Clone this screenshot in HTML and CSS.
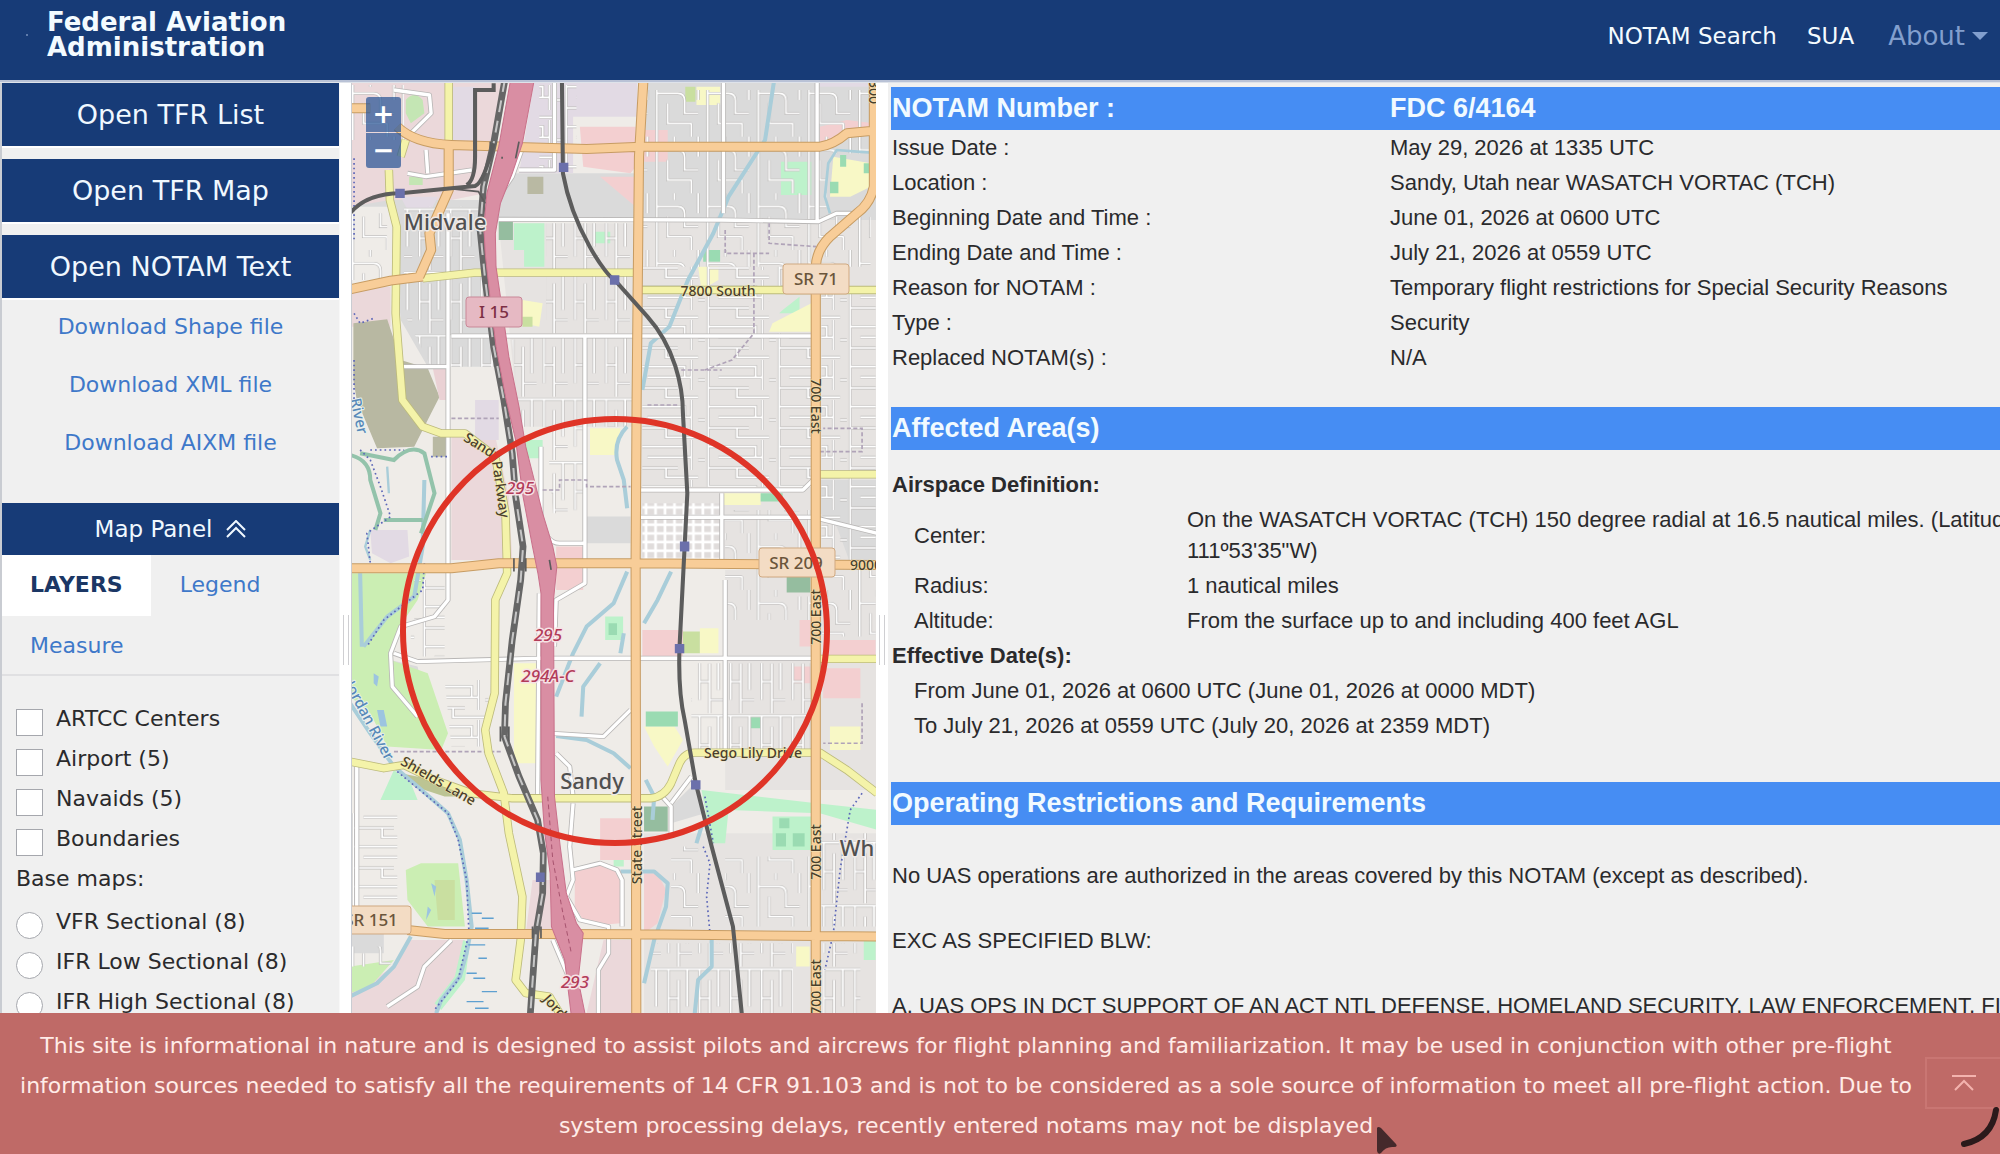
FILE: index.html
```html
<!DOCTYPE html>
<html lang="en">
<head>
<meta charset="utf-8">
<meta name="viewport" content="width=device-width, initial-scale=1">
<title>Federal Aviation Administration - NOTAM FDC 6/4164</title>
<link rel="stylesheet" href="styles.css">
</head>
<body>
<header class="topbar">
  <span class="logo-dot"></span>
  <h1 class="brand">Federal Aviation<br>Administration</h1>
  <nav class="topnav">
    <a href="#search">NOTAM Search</a>
    <a href="#sua">SUA</a>
    <button class="about" type="button">About<span class="caret"></span></button>
  </nav>
</header>

<main class="panes">
  <aside class="sidebar">
    <div class="actions">
      <button class="action" type="button">Open TFR List</button>
      <button class="action" type="button">Open TFR Map</button>
      <button class="action" type="button">Open NOTAM Text</button>
    </div>
    <div class="downloads">
      <a href="#shape">Download Shape file</a>
      <a href="#xml">Download XML file</a>
      <a href="#aixm">Download AIXM file</a>
    </div>
    <button class="panel-toggle" type="button">Map Panel
      <svg width="20" height="18" viewBox="0 0 20 18" fill="none" stroke="currentColor" stroke-width="2"><path d="M1 10 10 1l9 9M1 17l9-9 9 9"/></svg>
    </button>
    <nav class="tabs">
      <a class="tab tab-active" href="#layers">LAYERS</a>
      <a class="tab" href="#legend">Legend</a>
      <a class="tab" href="#measure">Measure</a>
    </nav>
    <form class="layers">
      <label class="option"><input type="checkbox">ARTCC Centers</label>
      <label class="option"><input type="checkbox">Airport (5)</label>
      <label class="option"><input type="checkbox">Navaids (5)</label>
      <label class="option"><input type="checkbox">Boundaries</label>
      <p class="group-title">Base maps:</p>
      <label class="option"><input type="radio" name="base">VFR Sectional (8)</label>
      <label class="option"><input type="radio" name="base">IFR Low Sectional (8)</label>
      <label class="option"><input type="radio" name="base">IFR High Sectional (8)</label>
    </form>
  </aside>

  <div class="splitter"><span class="grip"></span></div>

  <section class="map">
    <svg class="map-canvas" viewBox="0 0 524 930" preserveAspectRatio="xMinYMin slice">
      <defs>
        <pattern id="st-v" width="92" height="190" patternUnits="userSpaceOnUse">
          <path fill="none" stroke="#bbb9b7" stroke-width="9" d="M0 8H92M22 8V150M52 40V190M78 8V120M22 95H52M52 150H92"/>
          <path fill="none" stroke="#fff" stroke-width="5" d="M0 8H92M22 8V150M52 40V190M78 8V120M22 95H52M52 150H92"/>
        </pattern>
        <pattern id="st-h" width="210" height="120" patternUnits="userSpaceOnUse">
          <path fill="none" stroke="#bbb9b7" stroke-width="9" d="M10 0V120M10 20H150V52M40 52H170M10 84H130M95 84V112H190M170 0V90M190 60H210"/>
          <path fill="none" stroke="#fff" stroke-width="5" d="M10 0V120M10 20H150V52M40 52H170M10 84H130M95 84V112H190M170 0V90M190 60H210"/>
        </pattern>
        <pattern id="st-c" width="150" height="170" patternUnits="userSpaceOnUse">
          <path fill="none" stroke="#bbb9b7" stroke-width="9" d="M8 0V170M8 40H70Q90 40 90 62V100H130M40 70V130H110M110 130V170M130 0V60M60 0V20"/>
          <path fill="none" stroke="#fff" stroke-width="5" d="M8 0V170M8 40H70Q90 40 90 62V100H130M40 70V130H110M110 130V170M130 0V60M60 0V20"/>
        </pattern>
        <pattern id="st-g" width="28" height="26" patternUnits="userSpaceOnUse">
          <path fill="none" stroke="#fff" stroke-width="8" d="M8 0V26M0 8H28"/>
        </pattern>
      </defs>

      <!-- Drawn on a grid about three times finer than the map pane -->
      <g transform="translate(-2 -3) scale(.338 .3333)">
        <rect width="1570" height="2810" fill="#efece8"/>
        <!-- land use -->
        <path fill="#e6e3e1" d="M860 420H1570V1450H860ZM440 430H850V1040H500ZM1110 1470H1570V2130H1110ZM870 2260H1570V2810H870Z"/>
        <g fill="#dadada">
          <path d="M0 380H120L150 720 230 860H460L400 440V360H300L0 330Z"/>
          <path d="M860 0H1570V420H860ZM440 280H860V420H430Z"/>
          <path d="M1390 1200H1570V1450H1480L1440 1340 1390 1300ZM690 1310H830V1390H690ZM120 1740 200 1760 230 1900 150 1860ZM950 2180 1030 2100 1050 2200 950 2230ZM0 2560H100V2620H0Z"/>
        </g>
        <path fill="#e0dcdb" d="M865 1270H1095V1440H865Z"/>
        <g fill="#ebd8da">
          <path d="M0 0H470L400 340 300 360H120L0 380Z"/>
          <path d="M0 620H120V740H0ZM300 1070H430L470 1250 480 1440H300ZM180 2580H340L330 2680 260 2800H0V2740L130 2660ZM750 2580H850V2800H700ZM540 2400H600V2560H520Z"/>
        </g>
        <g fill="#e2dae4"><path d="M545 0H850V110H660V280H500ZM150 350H260L240 390H170ZM1390 0H1570V20H1390ZM370 960H440V1080H370ZM300 20H370V180H300ZM60 1350H170L175 1430 120 1450 65 1420Z"/></g>
        <g fill="#f3cfd0">
          <path d="M680 140H845V260L830 280 690 260ZM740 290H845V380ZM870 150H940V245H870ZM1390 140 1470 120 1550 130V150L1470 160 1390 200Z"/>
          <path d="M610 1400H690V1530H610ZM865 1650H985V1730H865ZM1330 1620H1370V1700H1330ZM1400 1680H1555V1725H1400ZM1310 1760H1370V1810H1310ZM1400 1765H1510V1855H1400ZM740 2215H830V2340H740Z"/>
          <path d="M665 2370Q730 2340 800 2370V2530L740 2535 690 2520 665 2480ZM870 2380H910L935 2430 910 2530 870 2560Z"/>
        </g>
        <g fill="#cbeeb3">
          <path d="M165 60Q190 30 215 60L220 100 180 130 165 100ZM175 290H215V315H175Z" fill="#c4e6b4"/>
          <path d="M0 1480H225L200 1560 140 1650 120 1740 230 1780 270 1900 290 1960 270 2010 110 2000 60 1900 0 1850Z"/>
          <path d="M165 2370 210 2350H320L340 2540H230L170 2460ZM0 2660 130 2640 60 2720 0 2740Z"/>
        </g>
        <g fill="#bdf2cb">
          <path d="M485 430H575V560H515V510H485ZM725 455H770V490H725ZM1275 245H1365V345H1275ZM90 2160 130 2070 180 2110 200 2160ZM1040 2130 1380 2170 1560 2190V2250L1390 2200 1120 2190 1110 2290 1070 2290ZM1250 2210H1370V2310H1250ZM515 1080H570V1135H515ZM1520 2580H1555V2640H1520ZM1280 690 1330 650V700H1270ZM780 2340H810V2360H780ZM755 1610H808V1680H755ZM335 2580 355 2590 340 2700 270 2790 250 2770 310 2690Z"/>
        </g>
        <g fill="#f8f8c6">
          <path d="M1025 20H1095V75H1025ZM1430 230 1540 250V320L1480 350 1420 350ZM1030 560H1090V600L1040 630ZM1250 730 1365 670V755H1240ZM710 1045H800L790 1125H710ZM1105 1240H1215V1275H1105ZM1035 1645H1090V1720H1035ZM485 1750H550V2050H485ZM870 1940H960L985 1980 940 2060 900 2000ZM1420 1940H1510V2010H1420ZM510 660 570 670 560 740 510 730ZM1320 2600H1360V2660H1320Z"/>
        </g>
        <g fill="#9adbb2">
          <path d="M1045 510H1095V545H1045ZM1420 305H1445V340H1420ZM1450 225H1468V260H1450ZM1520 250H1540V280H1520ZM875 1895H970V1940H875ZM1185 1905H1215V1945H1185ZM1215 1240H1280V1265H1215ZM765 1630H790V1665H765ZM1260 2260H1290V2300H1260ZM1310 2260H1345V2300H1310ZM1270 2215H1300V2245H1270Z"/>
          <path fill="#95bd9f" d="M440 425H482V480H440ZM1292 1490H1362V1538H1292ZM870 2180H940V2255H870Z"/>
          <path fill="#b9b9a3" d="M525 290H572V342H525ZM245 1070H290V1130H245Z"/>
          <path fill="#c9dfa0" d="M992 20H1022V65H992ZM985 1655H1035V1720H985ZM510 710H540V740H510ZM250 2400H310V2520H260Z"/>
          <path fill="#bcc493" d="M150 2080 250 2100 330 2150 280 2150 190 2120Z"/>
        </g>
        <path fill="#b8b8a2" d="M10 730 110 718 150 840 230 865 265 950 240 1000 190 1100 80 1105 20 960 10 900Z"/>
        <path fill="#ead1d4" d="M245 865H285V960H265Z"/>

        <!-- local street fabric -->
        <g>
          <path fill="url(#st-c)" d="M865 30H1540V220H1410V410H1540V560H865Z"/>
          <path fill="url(#st-h)" d="M865 560H1370V640H1240V760H1370V1220H865ZM1395 640H1555V1440H1395Z"/>
          <path fill="url(#st-v)" d="M580 430H845V1040H500L480 780 580 760ZM160 380H385L430 860H240L160 700ZM580 1020H700V1300H600Z"/>
          <path fill="url(#st-g)" d="M865 1270H1095V1440H865Z"/>
          <path fill="url(#st-c)" d="M1110 1290H1365V1480H1280V1550H1365V1620H1110ZM1395 1470H1555V1670H1395ZM950 2300H1040V2540H950ZM1110 2330H1365V2540H1110Z"/>
          <path fill="url(#st-v)" d="M1010 1750H1370V2010H1010ZM890 2590H1310V2800H890ZM1395 2260H1555V2540H1395ZM1400 2590H1510V2800H1400Z"/>
          <path fill="url(#st-h)" d="M280 1800H410V2000H300ZM180 1500H280V1730H180ZM0 2200H140V2480H0ZM560 15H670V270H560Z"/>
          <path fill="url(#st-c)" d="M0 15H160V180H0ZM0 400H110V600H0ZM0 2600H120V2660H0Z"/>
        </g>

        <!-- water -->
        <g fill="none" stroke="#a9cdd9" stroke-width="12" stroke-linejoin="round">
          <path d="M1255 0 1228 180 1120 350 1075 460 1000 600 945 740 890 790 865 930"/>
          <path d="M820 1040Q780 1080 790 1140L810 1200 820 1285M820 1475 780 1570 700 1640 660 1720 610 1850M950 1475 910 1560 870 1630M810 1660 800 1720M740 1750 690 1820 685 1910M610 1968 700 1980 780 2020 830 2065M875 2100 900 2150 895 2220M800 2375H900L940 2410 935 2480 900 2580 870 2710M1070 2580 1070 2660 1030 2700 1020 2800M1025 2290 1040 2240"/>
          <path stroke-width="8" d="M1570 220 1500 215 1440 210 1415 250 1405 350 1420 400"/>
          <path d="M220 1200 215 1400 190 1550 110 1610 40 1700M30 1480 35 1700M0 1870 60 1960 130 2060 200 2120 290 2200 325 2280 345 2400 360 2540 345 2620 325 2690 270 2760 255 2800M0 2750 80 2710 130 2660 180 2570"/>
          <path stroke-width="7" d="M60 1350 45 1400 60 1440M110 1160 115 1240"/>
        </g>
        <path fill="none" stroke="#93c3ab" stroke-width="12" d="M0 1125Q60 1140 60 1200L90 1300 75 1350M30 1120 130 1140Q180 1090 220 1120L250 1240 210 1360M100 1320H215"/>
        <path fill="none" stroke="#5fa0d0" stroke-width="4" d="M360 2500H390M390 2515H425M370 2545H410M350 2595H400M380 2635H405M345 2680H375M365 2695H400M390 2735H435M345 2765H395M370 2785H410"/>
        <path fill="#9cc4e0" d="M80 1890 100 1890 110 1940 90 1940ZM70 1780 85 1790 80 1820 70 1810ZM240 2410 255 2420 250 2450ZM230 2480 240 2490 225 2520Z"/>

        <!-- collector streets -->
        <g fill="none" stroke="#b9b7b6" stroke-width="15" stroke-linejoin="round">
          <path d="M130 30 235 45 240 100 170 170M170 280 225 290 360 270M225 210 230 280M290 400V1560L250 1610 150 1640 120 1720 125 1820 200 1910M130 1720 200 1745 560 1735H1370M440 418 1100 420 1385 425 1440 400 1480 400 1480 430M1382 0V420M300 768H1365M155 860H290M1105 0V400M695 770V1510L610 1560 605 1700M565 1100V1320Q580 1390 620 1390H690M860 1230H1340L1370 1200M860 1312H1370L1560 1360M1100 1240V1440M1110 1500V2010M590 1960 750 1970 830 1890M660 2170 650 2300 660 2400 640 2450 680 2520 765 2540V2620L735 2670V2800M915 2140 950 2180V2260M950 2170 1010 2090M660 2370 740 2350 790 2370 805 2400V2540M20 2060V2480M300 2580 220 2660 200 2720 110 2780M600 2580 650 2700M515 190 480 290 440 350M560 1540 555 2150M610 2020 650 2060 660 2150M605 0V270H500"/>
        </g>
        <g fill="none" stroke="#fff" stroke-width="10" stroke-linejoin="round">
          <path d="M130 30 235 45 240 100 170 170M170 280 225 290 360 270M225 210 230 280M290 400V1560L250 1610 150 1640 120 1720 125 1820 200 1910M130 1720 200 1745 560 1735H1370M440 418 1100 420 1385 425 1440 400 1480 400 1480 430M1382 0V420M300 768H1365M155 860H290M1105 0V400M695 770V1510L610 1560 605 1700M565 1100V1320Q580 1390 620 1390H690M860 1230H1340L1370 1200M860 1312H1370L1560 1360M1100 1240V1440M1110 1500V2010M590 1960 750 1970 830 1890M660 2170 650 2300 660 2400 640 2450 680 2520 765 2540V2620L735 2670V2800M915 2140 950 2180V2260M950 2170 1010 2090M660 2370 740 2350 790 2370 805 2400V2540M20 2060V2480M300 2580 220 2660 200 2720 110 2780M600 2580 650 2700M515 190 480 290 440 350M560 1540 555 2150M610 2020 650 2060 660 2150M605 0V270H500"/>
        </g>

        <!-- trails and boundaries -->
        <g fill="none" stroke="#5b66b8" stroke-width="5" stroke-dasharray="5 9">
          <path d="M12 235V480M12 700 30 730 70 715M12 840V960M30 1110 60 1140 90 1220 120 1310 50 1360 60 1450M220 1450 215 1530 100 1620 50 1700M140 2075 200 2125 290 2200 320 2280 345 2400 352 2560 320 2700 250 2790M60 1110 160 1110M240 1130 290 1130M1045 2300 1065 2350 1055 2450 1065 2560M1050 2150 1075 2290M1515 2140 1480 2190 1450 2370 1430 2560 1405 2670"/>
        </g>
        <g fill="none" stroke="#b0a3b8" stroke-width="5" stroke-dasharray="12 7">
          <path d="M300 1015H440M130 2015H450M570 1230H620V1200H700V1220H830M1110 450V520H1240M1240 430V490L1380 500M1195 520V760L1130 840 1050 870M880 975H970M1390 1115H1515V1045H1400M1515 1870V1990H1400M980 870H1100"/>
        </g>

        <!-- secondary roads -->
        <g fill="none" stroke="#bdbb7c" stroke-width="25" stroke-linejoin="round">
          <path d="M292 0V190M165 180 150 230M115 270 118 360 138 440 135 700 145 830 155 960 215 1040 270 1060 340 1060 430 1130 460 1300 465 1480 430 1560 428 1840 400 1950 410 2020 455 2140 470 2260 510 2450 505 2580 490 2700 520 2740 590 2750 620 2800M215 595 370 578H840M860 630H1570M0 2045 100 2065 160 2055 250 2100 360 2140 480 2155H890Q930 2150 950 2110L975 2050Q990 2018 1020 2018H1390L1470 2070 1560 2140M1390 1183H1570M1390 1737H1570"/>
        </g>
        <g fill="none" stroke="#f4f3a9" stroke-width="20" stroke-linejoin="round">
          <path d="M292 0V190M165 180 150 230M115 270 118 360 138 440 135 700 145 830 155 960 215 1040 270 1060 340 1060 430 1130 460 1300 465 1480 430 1560 428 1840 400 1950 410 2020 455 2140 470 2260 510 2450 505 2580 490 2700 520 2740 590 2750 620 2800M215 595 370 578H840M860 630H1570M0 2045 100 2065 160 2055 250 2100 360 2140 480 2155H890Q930 2150 950 2110L975 2050Q990 2018 1020 2018H1390L1470 2070 1560 2140M1390 1183H1570M1390 1737H1570"/>
        </g>
        <!-- primary roads -->
        <g fill="none" stroke="#c79c63" stroke-width="30" stroke-linejoin="round">
          <path d="M868 0 855 230 848 960 845 1450 847 2810M0 85H60M140 140Q190 190 300 195L700 207 860 200H1390Q1430 195 1470 160L1570 150M1550 0V320Q1540 370 1500 400L1420 470Q1380 510 1378 560V2810M0 1465H300L440 1450H850L1570 1455M170 2550 280 2562H560L850 2563 1570 2570M292 190V330L235 460 240 510 205 590M0 628 120 602 215 590"/>
        </g>
        <g fill="none" stroke="#f8cd98" stroke-width="24" stroke-linejoin="round">
          <path d="M868 0 855 230 848 960 845 1450 847 2810M0 85H60M140 140Q190 190 300 195L700 207 860 200H1390Q1430 195 1470 160L1570 150M1550 0V320Q1540 370 1500 400L1420 470Q1380 510 1378 560V2810M0 1465H300L440 1450H850L1570 1455M170 2550 280 2562H560L850 2563 1570 2570M292 190V330L235 460 240 510 205 590M0 628 120 602 215 590"/>
        </g>
        <!-- west railway -->
        <path fill="none" stroke="#666" stroke-width="20" d="M458 0 425 190 395 320 385 450 400 600 425 800 455 960 480 1120 490 1250 512 1400 505 1500 480 1680 460 1870 457 1970 500 2090 555 2220 572 2320 570 2440 550 2560 533 2810"/>
        <path fill="none" stroke="#c6c6c6" stroke-width="6" stroke-dasharray="36 26" d="M458 0 425 190 395 320 385 450 400 600 425 800 455 960 480 1120 490 1250 512 1400 505 1500 480 1680 460 1870 457 1970 500 2090 555 2220 572 2320 570 2440 550 2560 533 2810"/>
        <!-- interstate -->
        <path fill="#d98ea3" stroke="#c9718b" stroke-width="3" d="M475 0 440 200 405 340 396 440 400 520 415 660 432 800 462 960 490 1080 512 1250 540 1400 556 1480 565 1540V2100L575 2250 592 2380 596 2540 635 2640 655 2810H697L675 2700 690 2560 670 2530 640 2440 622 2300 605 2150 602 1560 612 1460 600 1400 570 1300 545 1200 520 1100 500 980 470 830 445 650 432 560 430 460 445 370 480 280 510 190 545 0Z"/>
        <path fill="none" stroke="#a85570" stroke-width="3" stroke-dasharray="14 10" d="M585 2150 600 2340 630 2500 655 2620"/>
        <!-- light rail -->
        <g fill="none" stroke="#5c5c5c" stroke-width="12">
          <path d="M627 0 630 280C660 450 760 590 783 600L880 710C960 800 985 920 985 1000L998 1240 990 1400 975 1700Q970 1830 990 1920L1023 2110 1070 2300 1133 2540 1160 2810M425 10V30H370V230Q370 300 345 315M0 400Q50 340 150 340L300 325 370 318Q395 310 425 190"/>
          <path stroke-width="5" d="M290 325 380 335 400 370M445 1940V1985M470 1940V1985M540 2540V2575M565 2540V2575M415 185V205M500 185 490 235M450 230V236M485 1435V1475M520 1435V1475M590 1440 595 1470"/>
        </g>
        <g fill="#6b70ab"><path d="M618 248H646V276H618ZM134 326H162V354H134ZM769 586H797V614H769ZM976 1385H1004V1415H976ZM961 1692H989V1720H961ZM1009 2101H1037V2129H1009ZM550 2378H576V2406H550Z"/></g>
      </g>

      <!-- route shields -->
      <g stroke-width="1">
        <rect x="114" y="214" width="56" height="30" rx="3" fill="#e6b9c3" stroke="#c98797"/>
        <g fill="#f3dcc4" stroke="#d0a981">
          <rect x="431" y="181" width="66" height="30" rx="3"/>
          <rect x="407" y="465" width="76" height="29" rx="3"/>
          <rect x="-6" y="823" width="65" height="28" rx="3"/>
        </g>
      </g>
      <g class="shield-text">
        <text x="142" y="235" fill="#7d2f44">I 15</text>
        <text x="464" y="202">SR 71</text>
        <text x="444" y="486">SR 209</text>
        <text x="19" y="843">SR 151</text>
      </g>
      <g class="town">
        <text x="93" y="147">Midvale</text>
        <text x="240" y="706">Sandy</text>
        <text x="505" y="773">Wh</text>
      </g>
      <g class="road">
        <text x="366" y="213">7800 South</text>
        <text x="401" y="675">Sego Lily Drive</text>
        <text x="514" y="487">9000</text>
        <text transform="translate(290 762) rotate(-90)">State Street</text>
        <text transform="translate(469 534) rotate(-90)">700 East</text>
        <text transform="translate(469 769) rotate(-90)">700 East</text>
        <text transform="translate(469 904) rotate(-90)">700 East</text>
        <text transform="translate(459 323) rotate(90)">700 East</text>
        <text transform="translate(517 5) rotate(90)">1300</text>
        <text transform="translate(84 702) rotate(30)">Shields Lane</text>
        <text transform="translate(128 368) rotate(32)">Sandy</text>
        <text transform="translate(144 407) rotate(82)">Parkway</text>
        <text transform="translate(205 933) rotate(48)">Jordan</text>
      </g>
      <g class="exit">
        <text x="168" y="411">295</text>
        <text x="196" y="558">295</text>
        <text x="196" y="599">294A-C</text>
        <text x="223" y="905">293</text>
      </g>
      <g class="river">
        <text transform="translate(2 334) rotate(78)">River</text>
        <text transform="translate(13 640) rotate(62)">Jordan River</text>
      </g>
      <circle cx="263" cy="548" r="212" fill="none" stroke="#df3427" stroke-width="6"/>
    </svg>
    <div class="zoom">
      <button type="button" aria-label="Zoom in">+</button>
      <button type="button" aria-label="Zoom out">−</button>
    </div>
  </section>

  <div class="splitter splitter-narrow"><span class="grip"></span></div>

  <article class="notam">
    <table class="facts">
      <thead><tr><th>NOTAM Number :</th><th>FDC 6/4164</th></tr></thead>
      <tbody>
        <tr><td>Issue Date :</td><td>May 29, 2026 at 1335 UTC</td></tr>
        <tr><td>Location :</td><td>Sandy, Utah near WASATCH VORTAC (TCH)</td></tr>
        <tr><td>Beginning Date and Time :</td><td>June 01, 2026 at 0600 UTC</td></tr>
        <tr><td>Ending Date and Time :</td><td>July 21, 2026 at 0559 UTC</td></tr>
        <tr><td>Reason for NOTAM :</td><td>Temporary flight restrictions for Special Security Reasons</td></tr>
        <tr><td>Type :</td><td>Security</td></tr>
        <tr><td>Replaced NOTAM(s) :</td><td>N/A</td></tr>
      </tbody>
    </table>
    <section class="area">
      <h2>Affected Area(s)</h2>
      <h3>Airspace Definition:</h3>
      <table class="airspace">
        <tbody>
          <tr><td>Center:</td><td>On the WASATCH VORTAC (TCH) 150 degree radial at 16.5 nautical miles. (Latitude: 40º34'46"N, Longitude:<br>111º53'35"W)</td></tr>
          <tr><td>Radius:</td><td>1 nautical miles</td></tr>
          <tr><td>Altitude:</td><td>From the surface up to and including 400 feet AGL</td></tr>
        </tbody>
      </table>
      <h3>Effective Date(s):</h3>
      <p class="dates">From June 01, 2026 at 0600 UTC (June 01, 2026 at 0000 MDT)<br>To July 21, 2026 at 0559 UTC (July 20, 2026 at 2359 MDT)</p>
    </section>
    <section class="rules">
      <h2>Operating Restrictions and Requirements</h2>
      <p>No UAS operations are authorized in the areas covered by this NOTAM (except as described).</p>
      <p>EXC AS SPECIFIED BLW:</p>
      <p>A. UAS OPS IN DCT SUPPORT OF AN ACT NTL DEFENSE, HOMELAND SECURITY, LAW ENFORCEMENT, FIREFIGHTING</p>
    </section>
  </article>
</main>

<footer class="notice">
  <p>This site is informational in nature and is designed to assist pilots and aircrews for flight planning and familiarization. It may be used in conjunction with other pre-flight information sources needed to satisfy all the requirements of 14 CFR 91.103 and is not to be considered as a sole source of information to meet all pre-flight action. Due to system processing delays, recently entered notams may not be displayed</p>
  <button class="to-top" type="button" aria-label="Back to top">
    <svg width="24" height="18" viewBox="0 0 24 18" fill="none" stroke="currentColor" stroke-width="2"><path d="M0 2H24M3 16l9-9 9 9"/></svg>
  </button>
  <svg class="spinner" width="42" height="44" viewBox="0 0 42 44" fill="none" stroke="#2b1a1b" stroke-width="6" stroke-linecap="round"><path d="M38 4Q34 32 6 38"/></svg>
  <svg class="pointer" width="22" height="28" viewBox="0 0 22 28"><path d="M1 2Q2 0 5 2L20 18Q22 21 18 21 10 20 5 27 2 29 1 25Z" fill="#45292b"/></svg>
</footer>
</body>
</html>
```
FILE: styles.css
```css
* { box-sizing: border-box; }
html, body { height: 100%; }
body {
  margin: 0;
  display: flex;
  flex-direction: column;
  overflow: hidden;
  background: #fff;
  color: #2a2a2c;
  font: 22px/40px "DejaVu Sans", sans-serif;
}
a { color: #3e78c9; text-decoration: none; }
button { font: inherit; color: inherit; border: 0; padding: 0; background: none; }
p { margin: 0; }

/* top bar */
.topbar {
  flex: none;
  display: flex;
  align-items: flex-start;
  height: 82px;
  padding: 10px 12px 0 26px;
  background: #173b77;
  border-bottom: 2px solid #b9c2d6;
}
.logo-dot { width: 2px; height: 2px; margin: 24px 19px 0 0; background: #5f7bab; }
.brand { margin: 0; color: #f4fbff; font-size: 26px; line-height: 25px; }
.topnav { margin-left: auto; display: flex; align-items: center; gap: 30px; height: 52px; color: #f4fbff; font-size: 23px; }
.topnav a { color: inherit; }
.about { display: flex; align-items: center; gap: 7px; color: #829fce; font-size: 26px; margin-left: 4px; }
.caret { border: 8px solid transparent; border-top-color: currentColor; border-bottom-width: 0; }

/* panes */
.panes { flex: 1; min-height: 0; display: flex; border-top: 1px solid #dfe3ea; }
.sidebar {
  flex: 0 0 17%;
  overflow: hidden;
  background: #f0f0f0;
  border-left: 2px solid #c9ccd2;
  border-right: 1px solid #f8f8f8;
}
.actions { display: flex; flex-direction: column; gap: 13px; }
.action, .panel-toggle { width: 100%; background: #173b77; color: #f0f8ff; text-align: center; }
.action { height: 63px; font-size: 27px; box-shadow: 0 2px #fff; }
.downloads { display: flex; flex-direction: column; align-items: center; gap: 18px; padding-top: 9px; height: 205px; }
.panel-toggle { height: 52px; display: flex; align-items: center; justify-content: center; gap: 14px; font-size: 23px; }
.tabs { display: flex; flex-wrap: wrap; height: 121px; border-bottom: 2px solid #e0e0e2; }
.tab { padding: 10px 28px; height: 61px; }
.tab-active { background: #fff; color: #1b3765; font-weight: bold; margin-right: 1px; }
.layers { padding: 23px 15px 0 14px; }
.option { display: flex; align-items: flex-start; gap: 13px; height: 40px; white-space: nowrap; }
.option input {
  appearance: none;
  flex: none;
  width: 27px;
  height: 27px;
  margin: 10px 0 0;
  background: #fff;
  border: 1px solid #a5a7ad;
}
.option input[type="radio"] { border-radius: 50%; }
.group-title { margin-bottom: 3px; }

.splitter { flex: 0 0 12px; display: flex; align-items: center; justify-content: center; background: #fff; border-right: 1px solid #c9ccd2; }
.splitter-narrow { border: 0; }
.grip { width: 6px; height: 50px; margin-top: 184px; border: 1px solid #cfcfd2; border-width: 0 1px; }

/* map */
.map { flex: 0 0 26.2%; position: relative; overflow: hidden; background: #efece8; }
.map-canvas { display: block; width: 100%; height: 100%; font-family: "Noto Sans", sans-serif; }
.map-canvas text { text-anchor: middle; paint-order: stroke; stroke-linejoin: round; font-weight: 500; }
.town { font-size: 22px; fill: #505050; stroke: #eeeae8; stroke-width: 3px; }
.road { font-size: 14px; fill: #4a3f2b; stroke: #f5e7b8; stroke-width: 1px; }
.shield-text { font-size: 17px; fill: #6a553b; }
.exit { font-size: 17px; font-style: italic; fill: #b23c59; stroke: #f6e3e6; stroke-width: 3px; }
.river { font-size: 15px; fill: #5688b8; stroke: #e8f0ee; stroke-width: 2px; }
.zoom { position: absolute; left: 14px; top: 14px; display: flex; flex-direction: column; gap: 1px; }
.zoom button { width: 35px; height: 35px; background: rgba(40, 85, 150, .72); color: #fff; font-size: 26px; font-weight: bold; line-height: 33px; }
.zoom button:first-child { border-radius: 3px 3px 0 0; }
.zoom button:last-child { border-radius: 0 0 3px 3px; }

/* NOTAM text */
.notam {
  flex: 1;
  min-width: 0;
  overflow: hidden;
  padding: 4px 0 0 3px;
  background: #f0f0f0;
  font: 22px/35px "Liberation Sans", Arial, sans-serif;
  white-space: nowrap;
}
table { border-collapse: collapse; table-layout: fixed; width: 100%; }
th, td { padding: 0; text-align: left; font-weight: normal; }
th, h2 { height: 43px; margin: 0; background: #468df3; color: #f1faff; font-size: 27px; line-height: 43px; font-weight: bold; }
th:first-child, .facts td:first-child, h2, h3, .rules p { padding-left: 1px; }
.facts th:first-child { width: 499px; }
.facts { margin-bottom: 32px; }
h3 { margin: 0; font-size: 22px; line-height: 35px; }
.area h2 { margin-bottom: 17px; }
.airspace td:first-child { width: 296px; padding-left: 23px; }
.airspace tr:first-child td:last-child { padding: 2px 0; line-height: 31px; }
.dates { padding: 0 0 39px 23px; }
.rules h2 { margin-bottom: 33px; }
.rules p { margin-bottom: 30px; }

/* bottom notice */
.notice {
  flex: none;
  position: relative;
  padding: 13px 68px 8px 0;
  background: #bf6a67;
  color: #ffece8;
  text-align: center;
}
.to-top {
  position: absolute;
  right: -2px;
  top: 44px;
  width: 77px;
  height: 52px;
  border: 2px solid #c97673;
  color: #f3b3ae;
  line-height: 0;
}
.spinner { position: absolute; right: 0; bottom: 4px; }
.pointer { position: absolute; left: 1376px; bottom: 0; }
```
